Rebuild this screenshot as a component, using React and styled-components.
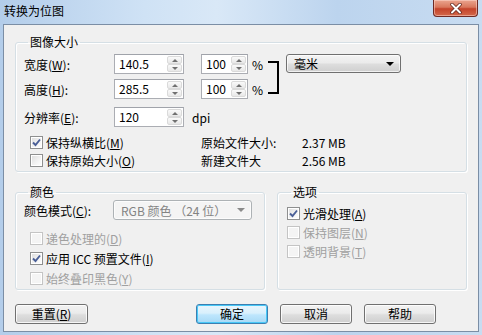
import React from 'react';
import styled, { createGlobalStyle } from 'styled-components';

const GlobalStyle = createGlobalStyle`
  html, body {
    margin: 0;
    padding: 0;
  }
  body {
    background: #c2d8ef;
    font-family: "Noto Sans CJK SC", "Noto Sans", sans-serif;
    font-size: 12px;
    color: #000;
  }
`;

const Frame = styled.div`
  width: 482px;
  height: 335px;
  box-sizing: border-box;
  padding: 0 3px 3px 3px;
  display: flex;
  flex-direction: column;
  background: linear-gradient(90deg, #b3cdea 0%, #cfe2f5 30%, #d9e8f7 45%, #bcd4ee 70%, #c8dcf1 100%);
`;

const TitleBar = styled.div`
  height: 24px;
  display: flex;
  justify-content: space-between;
  align-items: flex-start;
`;

const Title = styled.div`
  padding: 3px 0 0 1px;
  font-size: 12px;
  line-height: 16px;
`;

const CloseButton = styled.div`
  width: 45px;
  height: 17px;
  margin-right: 1px;
  box-sizing: border-box;
  border: 1px solid #6e2a24;
  border-top: none;
  border-radius: 0 0 4px 4px;
  background: linear-gradient(#eba58f 0%, #d9775c 45%, #c4432a 55%, #d3684a 100%);
  box-shadow: inset 0 0 0 1px rgba(255, 220, 210, 0.5);
  display: flex;
  align-items: center;
  justify-content: center;
`;

const Body = styled.div`
  flex: 1;
  background: #f0f0f0;
  border: 1px solid #7b8ea5;
  display: flex;
  flex-direction: column;
`;

const Group = styled.fieldset`
  margin: 0;
  padding: ${p => p.$pad};
  border: 1px solid #d5dfe5;
  border-radius: 3px;
  min-inline-size: 0;
  box-shadow: inset 1px 1px 0 #fff, 1px 1px 0 #fff;
  width: ${p => (p.$w ? `${p.$w}px` : 'auto')};
  box-sizing: border-box;
`;

const Legend = styled.legend`
  padding: 0 2px;
  margin-left: 4px;
  line-height: 16px;
`;

const SizeGroup = styled(Group)`
  margin: 9px 11px 0 11px;
`;

const TopArea = styled.div`
  display: flex;
  align-items: flex-start;
`;

const RowsColumn = styled.div`
  display: flex;
  flex-direction: column;
  gap: 5px;
`;

const Row = styled.div`
  display: flex;
  align-items: center;
  height: ${p => p.$h || 20}px;
  margin-top: ${p => p.$mt || 0}px;
`;

const Label = styled.span`
  width: ${p => p.$w || 90}px;
  flex: none;
  white-space: nowrap;
`;

const SpinField = styled.div`
  width: ${p => p.$w}px;
  height: 20px;
  margin-left: ${p => p.$ml || 0}px;
  box-sizing: border-box;
  border: 1px solid #abadb3;
  border-top-color: #a0a3aa;
  background: #fff;
  display: flex;
  flex: none;
`;

const SpinValue = styled.span`
  flex: 1;
  padding-left: 4px;
  line-height: 18px;
`;

const SpinButtons = styled.div`
  width: 17px;
  padding: 1px;
  box-sizing: border-box;
  display: flex;
  flex-direction: column;
`;

const SpinArrow = styled.div`
  flex: 1;
  border: 1px solid #dadada;
  border-radius: 2px;
  background: linear-gradient(#fafafa, #e8e8e8);
  display: flex;
  align-items: center;
  justify-content: center;

  &::after {
    content: '';
    border-left: 3px solid transparent;
    border-right: 3px solid transparent;
    ${p => (p.$up ? 'border-bottom: 3px solid #707070;' : 'border-top: 3px solid #707070;')}
  }
`;

const Unit = styled.span`
  margin-left: ${p => p.$ml || 4}px;
`;

const Bracket = styled.div`
  width: 9px;
  height: 29px;
  margin: 7px 0 0 5px;
  border: 2px solid #000;
  border-left: none;
  flex: none;
`;

const Select = styled.div`
  width: ${p => p.$w}px;
  height: ${p => p.$h || 19}px;
  margin-left: ${p => p.$ml || 0}px;
  box-sizing: border-box;
  border: 1px solid ${p => (p.$disabled ? '#adb2b5' : '#707070')};
  border-radius: 3px;
  background: ${p =>
    p.$disabled
      ? '#f4f4f4'
      : 'linear-gradient(#f4f4f4 0%, #ebebeb 45%, #dddddd 55%, #cfcfcf 100%)'};
  color: ${p => (p.$disabled ? '#838383' : '#000')};
  display: flex;
  align-items: center;
  justify-content: space-between;
  padding: 0 6px 0 7px;
  flex: none;
  box-shadow: inset 0 0 0 1px rgba(255, 255, 255, 0.7);

  &::after {
    content: '';
    border-left: 4px solid transparent;
    border-right: 4px solid transparent;
    border-top: 4px solid ${p => (p.$disabled ? '#8a8a8a' : '#000')};
  }
`;

const CheckRow = styled.div`
  display: flex;
  align-items: center;
  height: ${p => p.$h || 18}px;
  margin-top: ${p => p.$mt || 0}px;
  padding-left: ${p => p.$pl || 0}px;
  color: ${p => (p.$disabled ? '#a0a0a0' : '#000')};
`;

const CheckLabel = styled.span`
  width: ${p => (p.$w ? `${p.$w}px` : 'auto')};
  flex: none;
  white-space: nowrap;
`;

const Box = styled.span`
  width: 13px;
  height: 13px;
  box-sizing: border-box;
  margin-right: 3px;
  border: 1px solid ${p => (p.$disabled ? '#c4c4c4' : '#8e8f8f')};
  background: ${p =>
    p.$disabled ? '#f4f4f4' : 'linear-gradient(135deg, #dcdcdc 0%, #f4f4f4 60%, #fff 100%)'};
  box-shadow: inset 0 0 0 1px #fff;
  display: flex;
  align-items: center;
  justify-content: center;
  flex: none;
`;

const InfoLabel = styled.span`
  width: ${p => p.$w}px;
  flex: none;
  white-space: nowrap;
`;

const LowerArea = styled.div`
  display: flex;
  gap: 12px;
  margin: 12px 11px 0 11px;
`;

const ButtonBar = styled.div`
  display: flex;
  margin: 14px 42px 0 11px;
`;

const Button = styled.div`
  width: ${p => p.$w || 72}px;
  height: 20px;
  margin-left: ${p => p.$ml || 0}px;
  box-sizing: border-box;
  border: 1px solid ${p => (p.$default ? '#3c7fb1' : '#707070')};
  border-radius: 3px;
  background: ${p =>
    p.$default
      ? 'linear-gradient(#eaf6fd 0%, #d9f0fc 45%, #bee6fd 55%, #a7d9f5 100%)'
      : 'linear-gradient(#f2f2f2 0%, #ebebeb 45%, #dddddd 55%, #cfcfcf 100%)'};
  box-shadow: inset 0 0 0 1px ${p => (p.$default ? '#48c8f7' : 'rgba(255,255,255,0.8)')};
  display: flex;
  align-items: center;
  justify-content: center;
  line-height: 16px;
`;

const Spin = ({ value, w, ml }) => (
  <SpinField $w={w} $ml={ml}>
    <SpinValue>{value}</SpinValue>
    <SpinButtons>
      <SpinArrow $up />
      <SpinArrow />
    </SpinButtons>
  </SpinField>
);

const Check = ({ checked, disabled }) => (
  <Box $disabled={disabled}>
    {checked && (
      <svg width="9" height="9" viewBox="0 0 9 9">
        <path d="M1 4.5 L3.5 7 L8 1.5" fill="none" stroke="#4a5f97" strokeWidth="1.9" />
      </svg>
    )}
  </Box>
);

export default function App() {
  return (
    <>
      <GlobalStyle />
      <Frame>
        <TitleBar>
          <Title>转换为位图</Title>
          <CloseButton>
            <svg width="12" height="11" viewBox="0 0 12 11">
              <path d="M2 1.5 L10 9.5 M10 1.5 L2 9.5" stroke="#5a2018" strokeWidth="3.4" strokeLinecap="round" />
              <path d="M2 1.5 L10 9.5 M10 1.5 L2 9.5" stroke="#fff" strokeWidth="2" strokeLinecap="round" />
            </svg>
          </CloseButton>
        </TitleBar>
        <Body>
          <SizeGroup $pad="4px 8px 2px 8px">
            <Legend>图像大小</Legend>
            <TopArea>
              <RowsColumn>
                <Row>
                  <Label>宽度(<u>W</u>):</Label>
                  <Spin value="140.5" w={70} />
                  <Spin value="100" w={47} ml={17} />
                  <Unit>%</Unit>
                </Row>
                <Row>
                  <Label>高度(<u>H</u>):</Label>
                  <Spin value="285.5" w={70} />
                  <Spin value="100" w={47} ml={17} />
                  <Unit>%</Unit>
                </Row>
              </RowsColumn>
              <Bracket />
              <Select $w={115} $ml={7}>毫米</Select>
            </TopArea>
            <Row $mt={8}>
              <Label>分辨率(<u>E</u>):</Label>
              <Spin value="120" w={70} />
              <Unit $ml={8}>dpi</Unit>
            </Row>
            <CheckRow $pl={6} $h={18} $mt={6}>
              <Check checked />
              <CheckLabel $w={155}>保持纵横比(<u>M</u>)</CheckLabel>
              <InfoLabel $w={101}>原始文件大小:</InfoLabel>
              <span>2.37 MB</span>
            </CheckRow>
            <CheckRow $pl={6} $h={18}>
              <Check />
              <CheckLabel $w={155}>保持原始大小(<u>O</u>)</CheckLabel>
              <InfoLabel $w={101}>新建文件大</InfoLabel>
              <span>2.56 MB</span>
            </CheckRow>
          </SizeGroup>
          <LowerArea>
            <Group $w={250} $pad="0 8px 1px 8px">
              <Legend>颜色</Legend>
              <Row>
                <Label $w={89}>颜色模式(<u>C</u>):</Label>
                <Select $w={139} $h={20} $disabled>RGB 颜色 （24 位）</Select>
              </Row>
              <CheckRow $pl={6} $h={20} $mt={8} $disabled>
                <Check disabled />
                <CheckLabel>递色处理的(<u>D</u>)</CheckLabel>
              </CheckRow>
              <CheckRow $pl={6} $h={20}>
                <Check checked />
                <CheckLabel>应用 ICC 预置文件(<u>I</u>)</CheckLabel>
              </CheckRow>
              <CheckRow $pl={6} $h={20} $disabled>
                <Check disabled />
                <CheckLabel>始终叠印黑色(<u>Y</u>)</CheckLabel>
              </CheckRow>
            </Group>
            <Group $w={190} $pad="4px 8px 6px 9px">
              <Legend>选项</Legend>
              <CheckRow $h={19}>
                <Check checked />
                <CheckLabel>光滑处理(<u>A</u>)</CheckLabel>
              </CheckRow>
              <CheckRow $h={19} $disabled>
                <Check disabled />
                <CheckLabel>保持图层(<u>N</u>)</CheckLabel>
              </CheckRow>
              <CheckRow $h={19} $disabled>
                <Check disabled />
                <CheckLabel>透明背景(<u>T</u>)</CheckLabel>
              </CheckRow>
            </Group>
          </LowerArea>
          <ButtonBar>
            <Button $w={73}>重置(<u>R</u>)</Button>
            <Button $default $ml={108}>确定</Button>
            <Button $ml={12}>取消</Button>
            <Button $ml={12}>帮助</Button>
          </ButtonBar>
        </Body>
      </Frame>
    </>
  );
}
